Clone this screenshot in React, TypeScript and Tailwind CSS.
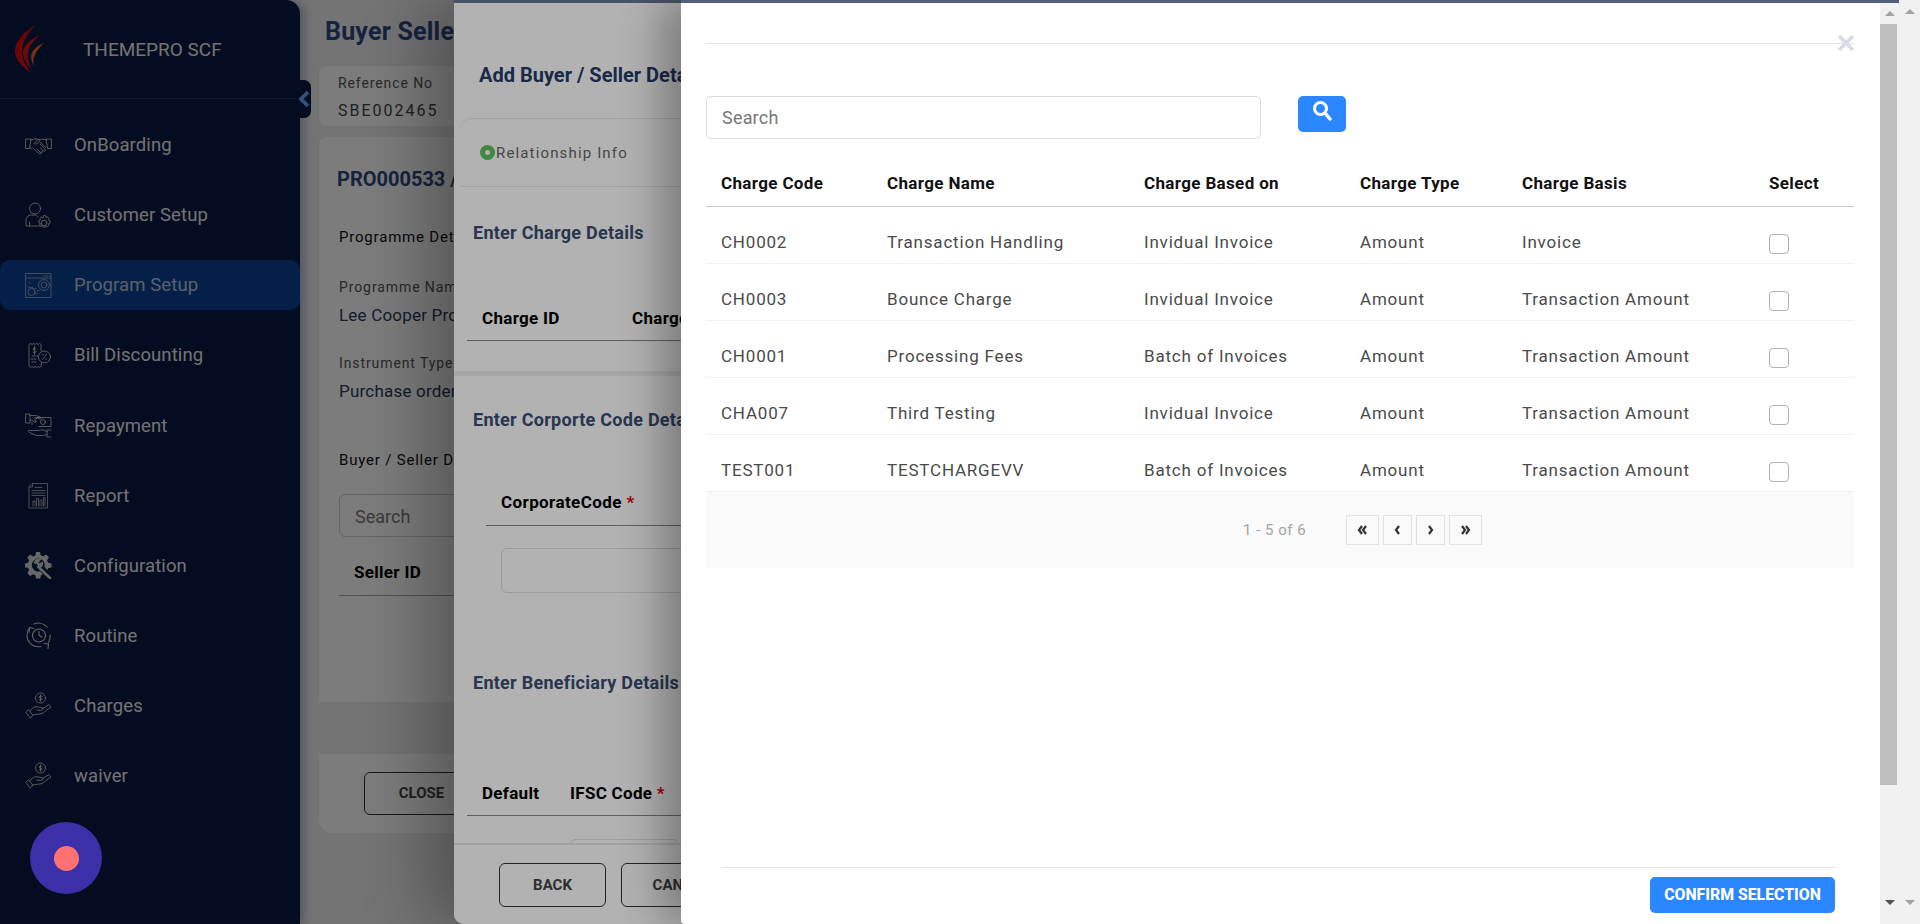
import React from "react";

const S = { fill: "none", stroke: "currentColor", strokeWidth: 0.85, strokeLinecap: "round" as const, strokeLinejoin: "round" as const };

function Handshake() {
  return (
    <svg width="27" height="27" viewBox="0 0 27 27" {...S}>
      <path d="M1 7h5l-1.500 9.500H1zM26 7h-5l1.500 9.500H26z" />
      <path d="M6 8c3-1 5-1.500 7.500-.5l1.500.8M21 8c-2.500-.5-4.500-1.200-7-.5-2 .6-3.500 2.400-5 4 1 .8 2.400.6 3.500-.4l2-1.600 6.200 6" />
      <path d="M5 15.500l1.500 1.200M8 16l3.500 3.500c1 1 2.500 1.600 3.500 2.200 1 .4 1.800-.6 1.300-1.600M12 17l3.500 3.500c1 .8 2.500-.2 1.800-1.500M15 15.500l3.500 3.500c1 .8 2.400-.3 1.700-1.500L15 12" />
    </svg>
  );
}
function UserGear() {
  return (
    <svg width="27" height="27" viewBox="0 0 27 27" {...S}>
      <circle cx="10" cy="6.500" r="5.500" />
      <path d="M13 15c-1-1.500-2-2-3-2H6c-3 0-5 2.500-5 5v6h14" />
      <path d="M4.500 20v4" />
      <path d="M19 14.500l1.800.4.400 1.600 1.600-.5 1.400 1.400-.6 1.600 1.500.8v2l-1.500.7.500 1.700-1.400 1.300-1.600-.6-.7 1.200h-2l-.6-1.300-1.700.6-1.400-1.400.6-1.600-1.400-.6v-2l1.400-.7-.5-1.700 1.400-1.300 1.600.5z" transform="translate(0 -1)" />
      <circle cx="19" cy="21" r="2.800" />
    </svg>
  );
}
function BrowserGears() {
  return (
    <svg width="27" height="27" viewBox="0 0 27 27" {...S}>
      <rect x="1" y="1.500" width="25" height="24" />
      <path d="M1 6h25M19 3.800h1M21.500 3.800h1M24 3.800h.5" />
      <circle cx="19" cy="13" r="3" />
      <circle cx="19" cy="13" r="5.500" />
      <circle cx="6.500" cy="20" r="3.500" />
      <path d="M3 14.500l2 1.500 2-1 2 2 2-.5M12 19l2-.5M4 10l1 1.500M10 21l2.500 1" />
    </svg>
  );
}
function Receipt() {
  return (
    <svg width="27" height="27" viewBox="0 0 27 27" {...S}>
      <path d="M16 8.500V2.500l-1.500-1-1.500 1-1.500-1-1.500 1-1.500-1-1.500 1-1.500-1-1.500 1V24l1.500 1.500 1.500-1 1.500 1 1.500-1 1.500 1 1.500-1 1.500 1 1.500-1 .5-4" />
      <circle cx="19.500" cy="15" r="6" />
      <path d="M17.500 17.500l4-5M17.500 12.800h1M20.500 17h1M7 14h6M6 17h5M7 20h4" />
      <path d="M11 6.500c-1-1-3-.8-3 .6s3 1 3 2.400-2 1.600-3 .6M9.500 4.500v8" />
    </svg>
  );
}
function HandBill() {
  return (
    <svg width="27" height="25" viewBox="0 0 27 25" {...S}>
      <path d="M1 1h4v9H1zM5 2.500h5.500l5 1.500c1 .5.800 2-.4 1.800l-3-.6-2.500 1.300 1.500 2.500-1.500.5-2-2-2.600-.5" />
      <path d="M10 4.500h16v9H14M11 8h-1M7 9.500v2" />
      <circle cx="18" cy="9" r="2.500" />
      <path d="M26 17h-4v7h4M22 18.500l-4-1.500c-2-.5-3.500.5-5 .5H4c-1 0-1 1.500.5 2l7 3h6l4.500-1" />
    </svg>
  );
}
function ReportDoc() {
  return (
    <svg width="27" height="27" viewBox="0 0 27 27" {...S} strokeWidth={0.7}>
      <path d="M7.500 1.500H22.500V26H4V5z" />
      <path d="M7.500 1.500V5H4M10 5.500h7M7 8.500h13M7 11h13M7 13.500h13" />
      <path d="M8 24v-5h2v5M11.500 24v-7.500h2V24M15 24v-6h2v6M18.500 24v-8.500h1.500V24" />
    </svg>
  );
}
function ConfigGear() {
  return (
    <svg width="27" height="27" viewBox="0 0 27 27">
      <path fill="currentColor" fillRule="evenodd" d="M11 0h4l.7 3.300 2.500 1 2.900-1.800 2.800 2.800-1.800 2.900 1 2.500L26.500 11.500v4l-3.200.6-.8 1.900-3-3a6.500 6.500 0 1 0-4.400 4.300l3 3-1.800.8L15 26.500h-4l-.6-3.300-2.500-1-2.800 1.800-2.800-2.800 1.800-2.900-1-2.500L0 15.500v-4l3.100-.7 1-2.500L2.300 5.400l2.800-2.800 2.900 1.800 2.500-1z" />
      <path d="M10 10.500a4 4 0 0 1 4-2.500l-2 2.500 2 2.500 2.800-1.500a4 4 0 0 1-3 3.800L25 26" fill="none" stroke="currentColor" strokeWidth="2.600" strokeLinecap="round" />
    </svg>
  );
}
function Routine() {
  return (
    <svg width="25" height="27" viewBox="0 0 25 27" {...S} strokeWidth={1.1}>
      <circle cx="13" cy="13.500" r="6.500" />
      <path d="M13 9.500v4l3 1.500" />
      <path d="M3.500 6C1.500 8.500 1 11 1 13.500a11.500 11.500 0 0 0 14 11M21 5a11.500 11.500 0 0 0-13-3M22 21c1.800-2.500 2.500-5 2-8" />
      <path d="M3 10.500L3.500 5.500l4.500 1M18 21.500l4.500 .5-.5 4.500" />
    </svg>
  );
}
function HandCoin() {
  return (
    <svg width="27" height="27" viewBox="0 0 27 27" {...S}>
      <circle cx="15.500" cy="6" r="5" />
      <path d="M15.500 2.800v6.400M17 4.500c-.8-.8-3-.6-3 .6 0 1.400 3 .7 3 2.100 0 1.200-2.200 1.400-3 .6" />
      <path d="M1 20.500l4 5.500 3-2.600L3.800 18z" />
      <path d="M5 18.500l3.500-3c2-1 3.200-1 5-.5l3.500.6c1.500.3 1.500 2.600-.5 2.600h-4.500M8 23c3-1 6-.5 9-1.500 2-1 5-4 9-6.500l-2-2.500-6.500 4" />
    </svg>
  );
}

const nav: { label: string; icon: React.ReactNode; active?: boolean }[] = [
  { label: "OnBoarding", icon: <Handshake /> },
  { label: "Customer Setup", icon: <UserGear /> },
  { label: "Program Setup", icon: <BrowserGears />, active: true },
  { label: "Bill Discounting", icon: <Receipt /> },
  { label: "Repayment", icon: <HandBill /> },
  { label: "Report", icon: <ReportDoc /> },
  { label: "Configuration", icon: <ConfigGear /> },
  { label: "Routine", icon: <Routine /> },
  { label: "Charges", icon: <HandCoin /> },
  { label: "waiver", icon: <HandCoin /> },
];

function Sidebar() {
  return (
    <aside className="relative z-10 flex h-[924px] w-[300px] shrink-0 flex-col rounded-tr-[14px] bg-[#081a42] text-[#ececec] shadow-[4px_0_10px_rgba(30,60,130,0.35)]">
      <div className="flex h-[99px] shrink-0 items-center border-b border-[#26375e] pl-[15px]">
        <svg width="32" height="50" viewBox="0 0 32 50" className="mt-[1px] shrink-0">
          <path d="M20 0C8 8 0 17 0 26c0 8 6 15 16 22C9 38 6 31 7 25 8 15 13 8 20 0z" fill="#e01010" />
          <path d="M25 10C14 15 8 21 8 28c0 6 4 11 9 17-3-7-5-12-4-17 1-7 5-12 12-18z" fill="#e01515" />
          <path d="M29 18c-8 3-13 8-13 14 0 3 1 6 3 9-1-4-1-7 1-11 2-5 5-8 9-12z" fill="#f0602a" />
        </svg>
        <span className="ml-[36px] text-[19px] leading-none">THEMEPRO SCF</span>
      </div>
      <nav className="flex flex-col pt-[11px]">
        {nav.map((n) => (
          <div key={n.label} className="flex h-[70.1px] items-center">
            <div className={`flex h-[50px] w-full items-center rounded-[10px] pl-[25px] ${n.active ? "bg-[#0a4396] text-[#b9c8dd]" : ""}`}>
              <span className={`flex w-[27px] justify-center ${n.active ? "text-[#a0aec4]" : "text-[#d4d4d4]"}`}>{n.icon}</span>
              <span className="ml-[22px] pt-[2px] text-[18.500px] tracking-[0.1px]">{n.label}</span>
            </div>
          </div>
        ))}
      </nav>
      <div className="absolute left-[296px] top-[80px] flex h-[38px] w-[15px] items-center justify-end rounded-r-[7px] bg-[#081a42] pr-[1px]">
        <svg width="12" height="18" viewBox="0 0 12 18"><path d="M10 2L3 9l7 7" fill="none" stroke="#6fa8f5" strokeWidth="3.800" /></svg>
      </div>
    </aside>
  );
}

function Main() {
  return (
    <main className="flex min-w-0 flex-1 flex-col pl-[19px] text-[#16264f]">
      <h1 className="ml-[6px] mt-[16px] whitespace-nowrap text-[25px] font-bold leading-[32px] tracking-[0.2px] text-[#2f4a80]">Buyer Seller Mapping</h1>
      <div className="mt-[18px] h-[60px] rounded-[8px] bg-white pl-[19px] pt-[8px]">
        <div className="text-[14px] leading-[18px] tracking-[0.9px] text-[#555]">Reference No</div>
        <div className="mt-[9px] text-[16px] leading-[20px] tracking-[2px] text-[#444]">SBE002465</div>
      </div>
      <section className="mt-[11px] h-[565px] rounded-t-[8px] bg-white pl-[18px] pt-[29px]">
        <div className="text-[20px] font-bold leading-[26px] text-[#2f4a80]">PRO000533 / Lee</div>
        <div className="ml-[2px] mt-[35px] text-[15px] leading-[20px] tracking-[0.8px] text-[#111] [font-weight:450]">Programme Details</div>
        <div className="ml-[2px] mt-[30px] text-[14px] leading-[20px] tracking-[0.9px] text-[#555]">Programme Name</div>
        <div className="ml-[2px] mt-[8px] whitespace-nowrap text-[17px] leading-[20px] tracking-[0.2px] text-[#2a3a5a]">Lee Cooper Pro</div>
        <div className="ml-[2px] mt-[28px] text-[14px] leading-[20px] tracking-[0.9px] text-[#555]">Instrument Type</div>
        <div className="ml-[2px] mt-[8px] whitespace-nowrap text-[17px] leading-[20px] tracking-[0.2px] text-[#2a3a5a]">Purchase order</div>
        <div className="ml-[2px] mt-[49px] text-[15px] leading-[20px] tracking-[0.8px] text-[#111] [font-weight:450]">Buyer / Seller Details</div>
        <div className="ml-[2px] mt-[24px] flex h-[43px] items-center rounded-[6px] border border-[#ccc] pl-[15px] pt-[2px] text-[18px] text-[#777]">Search</div>
        <div className="ml-[2px] border-b border-[#aaa] pb-[12px] pl-[15px] pt-[24px] text-[17px] font-bold leading-[22px] tracking-[0.3px] text-black">Seller ID</div>
      </section>
      <div className="mt-[52px] h-[79px] rounded-b-[14px] bg-white pl-[45px] pt-[18px]">
        <div className="flex h-[43px] w-[115px] items-center justify-center rounded-[6px] border border-[#333] text-[15px] font-bold text-[#444]">CLOSE</div>
      </div>
    </main>
  );
}

function SectionHead({ children }: { children: React.ReactNode }) {
  return <div className="whitespace-nowrap text-[18px] font-bold leading-[24px] tracking-[0.27px] text-[#3a4e72]">{children}</div>;
}
const Req = () => <span className="text-[#e00000]"> *</span>;

function FirstModal() {
  return (
    <div className="absolute bottom-0 left-[454px] top-0 w-[1300px] overflow-hidden rounded-bl-[10px] border-t-[3px] border-[#6a7893] bg-white shadow-[-30px_0_60px_rgba(0,0,0,0.28)]">
      <h2 className="ml-[25px] mt-[59px] text-[20px] font-bold leading-[26px] text-[#283c67]">Add Buyer / Seller Details</h2>
      <div className="ml-[6px] mt-[30px] flex h-[69px] items-center rounded-t-[12px] border-y border-[#e8e8e8] pl-[20px]">
        <span className="flex h-[15px] w-[15px] items-center justify-center rounded-full bg-[#5cc064]"><span className="h-[5px] w-[5px] rounded-full bg-white" /></span>
        <span className="ml-px text-[15px] leading-[20px] tracking-[1.15px] text-[#666]">Relationship Info</span>
      </div>
      <div className="ml-[19px] mt-[34px]"><SectionHead>Enter Charge Details</SectionHead></div>
      <div className="ml-[13px] mt-[62px] flex border-b border-[#888] pb-[11px] pl-[15px] text-[17px] font-bold leading-[22px] tracking-[0.3px] text-black">
        <span className="w-[150px]">Charge ID</span><span>Charge Name</span>
      </div>
      <div className="mt-[30px] h-[5px] bg-[#eeeeee]" />
      <div className="ml-[19px] mt-[32px]"><SectionHead>Enter Corporte Code Details</SectionHead></div>
      <div className="ml-[32px] mt-[59px] border-b border-[#888] pb-[12px] pl-[15px] text-[17px] font-bold leading-[22px] tracking-[0.4px] text-black">CorporateCode<Req /></div>
      <div className="ml-[47px] mt-[22px] h-[45px] rounded-[6px] border border-[#ddd]" />
      <div className="ml-[19px] mt-[78px]"><SectionHead>Enter Beneficiary Details</SectionHead></div>
      <div className="ml-[13px] mt-[87px] flex border-b border-[#888] pb-[11px] pl-[15px] text-[17px] font-bold leading-[22px] tracking-[0.3px] text-black">
        <span className="w-[88px]">Default</span><span>IFSC Code<Req /></span>
      </div>
      <div className="ml-[116px] mt-[23px] h-[40px] w-[109px] rounded-t-[6px] border border-[#ddd]" />
      <div className="absolute bottom-0 left-0 right-0 flex h-[81px] gap-[15px] border-t-[2px] border-[#e8e8e8] bg-white pl-[45px] pt-[18px]">
        <div className="flex h-[44px] w-[107px] items-center justify-center rounded-[6px] border border-[#333] text-[15px] font-bold text-[#444]">BACK</div>
        <div className="flex h-[44px] w-[120px] items-center justify-center rounded-[6px] border border-[#333] text-[15px] font-bold text-[#444]">CANCEL</div>
      </div>
    </div>
  );
}

const rows = [
  ["CH0002", "Transaction Handling", "Invidual Invoice", "Amount", "Invoice"],
  ["CH0003", "Bounce Charge", "Invidual Invoice", "Amount", "Transaction Amount"],
  ["CH0001", "Processing Fees", "Batch of Invoices", "Amount", "Transaction Amount"],
  ["CHA007", "Third Testing", "Invidual Invoice", "Amount", "Transaction Amount"],
  ["TEST001", "TESTCHARGEVV", "Batch of Invoices", "Amount", "Transaction Amount"],
];
const cols = "grid grid-cols-[166px_257px_216px_162px_247px_100px] items-center pl-[15px]";

function PageBtn({ w, children }: { w: string; children: React.ReactNode }) {
  return <div className={`flex h-[30px] items-center justify-center border border-[#e2e2e2] text-[#333] ${w}`}>{children}</div>;
}
function Chev({ dir, double }: { dir: "l" | "r"; double?: boolean }) {
  const p = dir === "l" ? "M6 2L3 6l3 4" : "M3 2l3 4-3 4";
  const q = dir === "l" ? "M10 2L7 6l3 4" : "M7 2l3 4-3 4";
  return (
    <svg width={double ? 13 : 9} height="12" viewBox={double ? "0 0 13 12" : "0 0 9 12"} fill="none" stroke="#333" strokeWidth="2.200">
      <path d={p} />
      {double && <path d={q} />}
    </svg>
  );
}

function SecondModal() {
  return (
    <div className="absolute bottom-0 left-[681px] top-0 flex w-[1199px] flex-col rounded-bl-[4px] border-t-[3px] border-[#525e7a] bg-white pl-[25px] pr-[26px] shadow-[-20px_0_40px_rgba(0,0,0,0.3)]">
      <div className="relative mt-[40px] h-px shrink-0 bg-[#e4e4e4]">
        <svg width="18" height="18" viewBox="0 0 18 18" className="absolute right-[-1px] top-[-9px]"><path d="M2 2l14 14M16 2L2 16" stroke="#d9dce3" strokeWidth="3.800" /></svg>
      </div>
      <div className="mt-[52px] flex shrink-0 items-start">
        <div className="flex h-[43px] w-[555px] items-center rounded-[5px] border border-[#dcdcdc] pl-[15px] text-[18px] tracking-[0.2px] text-[#777]">Search</div>
        <div className="ml-[37px] flex h-[36px] w-[48px] items-start justify-center rounded-[5px] bg-[#2b87ff] pt-[4px]">
          <svg width="22" height="22" viewBox="0 0 22 22" fill="none" stroke="#fff"><circle cx="9.500" cy="8.500" r="6" strokeWidth="3" /><path d="M14 13l5 6" strokeWidth="3.500" strokeLinecap="round" /></svg>
        </div>
      </div>
      <div className={`${cols} mt-[26px] h-[42px] shrink-0 border-b border-[#c8c8c8] pb-[4px] text-[17px] font-bold tracking-[0.35px] text-[#111]`}>
        <span>Charge Code</span><span>Charge Name</span><span>Charge Based on</span><span>Charge Type</span><span>Charge Basis</span><span>Select</span>
      </div>
      {rows.map((r) => (
        <div key={r[0]} className={`${cols} h-[57px] shrink-0 border-b border-[#f1f1f1] pt-[16px] text-[17px] tracking-[0.8px] text-[#4a4a4a]`}>
          {r.map((c) => <span key={c} className="whitespace-nowrap">{c}</span>)}
          <span className="mt-[1px] h-[20px] w-[20px] rounded-[4px] border border-[#b0b0b0] bg-white" />
        </div>
      ))}
      <div className="flex h-[76px] shrink-0 items-center bg-[#fafafa] pl-[537px]">
        <span className="w-[103px] text-[15px] tracking-[0.5px] text-[#a3a3a3]">1 - 5 of 6</span>
        <div className="flex gap-[4px]">
          <PageBtn w="w-[33px]"><Chev dir="l" double /></PageBtn>
          <PageBtn w="w-[29px]"><Chev dir="l" /></PageBtn>
          <PageBtn w="w-[29px]"><Chev dir="r" /></PageBtn>
          <PageBtn w="w-[33px]"><Chev dir="r" double /></PageBtn>
        </div>
      </div>
      <div className="flex-1" />
      <div className="ml-[16px] mr-[19px] flex h-[57px] shrink-0 items-start justify-end border-t border-[#e4e4e4] pt-[9px]">
        <div className="flex h-[36px] w-[185px] items-center justify-center rounded-[5px] bg-[#2b87ff] text-[15.800px] font-extrabold text-white">CONFIRM SELECTION</div>
      </div>
    </div>
  );
}

function Scrollbars() {
  const up = "h-0 w-0 border-x-[5px] border-b-[5px] border-x-transparent";
  const down = "h-0 w-0 border-x-[5px] border-t-[5px] border-x-transparent";
  return (
    <div className="absolute bottom-0 right-0 top-0 flex w-[40px] bg-[#f1f1f1]">
      <div className="flex w-[19px] flex-col items-center border-t-[3px] border-[#525e7a]">
        <div className="flex h-[21px] items-center justify-center"><div className={`${up} border-b-[#a3a3a3]`} /></div>
        <div className="h-[761px] w-[17px] self-start bg-[#bfbfbf]" />
        <div className="flex-1" />
        <div className="flex h-[24px] items-start justify-center"><div className={`${down} border-t-[#505050]`} /></div>
      </div>
      <div className="flex w-[21px] flex-col items-center">
        <div className="flex h-[22px] items-center justify-center"><div className={`${up} border-b-[#a3a3a3]`} /></div>
        <div className="flex-1" />
        <div className="flex h-[24px] items-start justify-center"><div className={`${down} border-t-[#a3a3a3]`} /></div>
      </div>
    </div>
  );
}

export default function App() {
  return (
    <div className="relative flex h-[924px] w-[1920px] overflow-hidden bg-[#eeeeee] font-['Roboto',sans-serif]">
      <Sidebar />
      <Main />
      <div className="absolute inset-0 z-20 bg-black/30" />
      <div className="absolute inset-0 z-20"><FirstModal /></div>
      <div className="absolute inset-0 z-30 bg-black/30" />
      <div className="absolute inset-0 z-30"><SecondModal /><Scrollbars /></div>
      <div className="absolute left-[30px] top-[822px] z-40 flex h-[72px] w-[72px] items-center justify-center rounded-full bg-[#3b30a8]">
        <div className="h-[25px] w-[25px] rounded-full bg-[#ff7272]" />
      </div>
    </div>
  );
}
